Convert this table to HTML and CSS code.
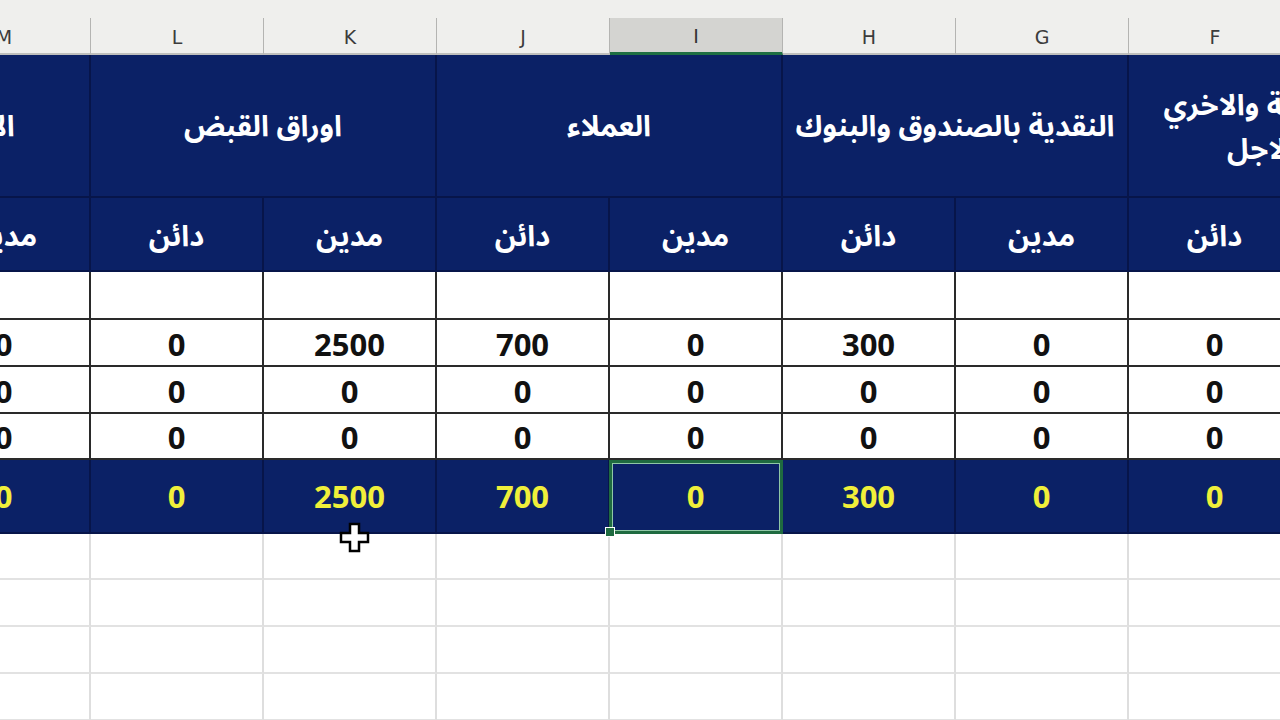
FILE: index.html
```html
<!DOCTYPE html>
<html lang="ar">
<head>
<meta charset="utf-8">
<title>Sheet</title>
<link rel="stylesheet" href="styles.css">
</head>
<body>
<div class="top"></div>
<div class="viewport">
  <div class="sheet">
    <div class="ch">N</div><div class="ch">M</div><div class="ch">L</div><div class="ch">K</div><div class="ch">J</div>
    <div class="ch ch-sel">I</div><div class="ch">H</div><div class="ch">G</div><div class="ch">F</div><div class="ch">E</div>

    <div class="h1 span2 h1-first" dir="rtl">الاصول الثابتة</div>
    <div class="h1 span2" dir="rtl">اوراق القبض</div>
    <div class="h1 span2" dir="rtl">العملاء</div>
    <div class="h1 span2" dir="rtl">النقدية بالصندوق والبنوك</div>
    <div class="h1 span2 two" dir="rtl"><span>الاوراق المالية والاخري</span><span>طويلة الاجل</span></div>

    <div class="h2">دائن</div><div class="h2">مدين</div>
    <div class="h2">دائن</div><div class="h2">مدين</div>
    <div class="h2">دائن</div><div class="h2">مدين</div>
    <div class="h2">دائن</div><div class="h2">مدين</div>
    <div class="h2">دائن</div><div class="h2">مدين</div>

    <div class="d r0"></div><div class="d r0"></div><div class="d r0"></div><div class="d r0"></div><div class="d r0"></div>
    <div class="d r0"></div><div class="d r0"></div><div class="d r0"></div><div class="d r0"></div><div class="d r0"></div>

    <div class="d r1">0</div><div class="d r1">0</div><div class="d r1">0</div><div class="d r1">2500</div><div class="d r1">700</div>
    <div class="d r1">0</div><div class="d r1">300</div><div class="d r1">0</div><div class="d r1">0</div><div class="d r1">0</div>

    <div class="d r1">0</div><div class="d r1">0</div><div class="d r1">0</div><div class="d r1">0</div><div class="d r1">0</div>
    <div class="d r1">0</div><div class="d r1">0</div><div class="d r1">0</div><div class="d r1">0</div><div class="d r1">0</div>

    <div class="d r2">0</div><div class="d r2">0</div><div class="d r2">0</div><div class="d r2">0</div><div class="d r2">0</div>
    <div class="d r2">0</div><div class="d r2">0</div><div class="d r2">0</div><div class="d r2">0</div><div class="d r2">0</div>

    <div class="t">0</div><div class="t">0</div><div class="t">0</div><div class="t">2500</div><div class="t">700</div>
    <div class="t t-sel">0<span class="handle"></span></div><div class="t">300</div><div class="t">0</div><div class="t">0</div><div class="t">0</div>

    <div class="g"></div><div class="g"></div><div class="g"></div><div class="g"></div><div class="g"></div>
    <div class="g"></div><div class="g"></div><div class="g"></div><div class="g"></div><div class="g"></div>
    <div class="g"></div><div class="g"></div><div class="g"></div><div class="g"></div><div class="g"></div>
    <div class="g"></div><div class="g"></div><div class="g"></div><div class="g"></div><div class="g"></div>
    <div class="g"></div><div class="g"></div><div class="g"></div><div class="g"></div><div class="g"></div>
    <div class="g"></div><div class="g"></div><div class="g"></div><div class="g"></div><div class="g"></div>
    <div class="g"></div><div class="g"></div><div class="g"></div><div class="g"></div><div class="g"></div>
    <div class="g"></div><div class="g"></div><div class="g"></div><div class="g"></div><div class="g"></div>
  </div>
  <svg class="cursor" width="32" height="32" viewBox="0 0 32 32" aria-hidden="true">
    <path d="M11 2 H20 V11 H29 V20 H20 V29 H11 V20 H2 V11 H11 Z" fill="#ffffff" stroke="#000000" stroke-width="2.5" stroke-linejoin="miter"/>
  </svg>
</div>
</body>
</html>
```

FILE: styles.css
```css
html, body {
  margin: 0;
  padding: 0;
  background: #ffffff;
  overflow: hidden;
  width: 1280px;
  height: 720px;
}

.top {
  height: 18px;
  background: #efefed;
}

.viewport {
  position: relative;
  width: 1280px;
  height: 702px;
  overflow: hidden;
}

.sheet {
  margin-left: -255px;
  display: grid;
  grid-template-columns: repeat(10, 173px);
  grid-template-rows: 37px 143px 74px 48px 47px 47px 46px 74px 46px 47px 47px 47px;
  width: 1730px;
}

.sheet > div {
  box-sizing: border-box;
  display: flex;
  align-items: center;
  justify-content: center;
}

.ch {
  background: #efefed;
  color: #3c3c3c;
  font-family: "DejaVu Sans", "Liberation Sans", sans-serif;
  font-size: 19px;
  border-right: 1px solid #b4b4b2;
  border-bottom: 2px solid #bfbfbd;
  background-clip: padding-box;
  padding-top: 2px;
}

.ch-sel {
  background: #d4d4d1;
  border-bottom: 3px solid #1f6f43;
  color: #333;
}

.h1, .h2 {
  background: #0b2166;
  color: #ffffff;
  font-family: "Noto Sans Arabic", "DejaVu Sans", sans-serif;
  font-weight: bold;
  font-size: 29px;
  border-right: 2px solid #07154a;
  border-bottom: 2px solid #07154a;
  white-space: nowrap;
}

.span2 {
  grid-column: span 2;
}

.h1 {
  padding-top: 2px;
}

.h1-first {
  padding-left: 22px;
}

.two {
  flex-direction: column;
  line-height: 44px;
  padding-top: 4px;
}

.h2 {
  padding-top: 4px;
}

.d {
  background: #ffffff;
  color: #111111;
  font-family: "Open Sans", "Liberation Sans", sans-serif;
  font-weight: bold;
  font-size: 31px;
  border-right: 2px solid #2a2a2a;
  border-bottom: 2px solid #2a2a2a;
  padding-top: 2px;
}

.t {
  background: #0b2166;
  color: #f0ef3a;
  font-family: "Open Sans", "Liberation Sans", sans-serif;
  font-weight: bold;
  font-size: 31px;
  border-right: 2px solid #07154a;
  border-bottom: 2px solid #07154a;
  position: relative;
}

.t-sel::after {
  content: "";
  position: absolute;
  left: -1px;
  top: 0;
  right: -2px;
  bottom: -2px;
  border: 3px solid #1f6b40;
  box-shadow: inset 0 0 0 1px #8fc7a6;
}

.handle {
  position: absolute;
  left: -5px;
  bottom: -5px;
  width: 8px;
  height: 8px;
  background: #1f6b40;
  border: 1px solid #ffffff;
  z-index: 2;
}

.g {
  background: #ffffff;
  border-right: 2px solid #dedede;
  border-bottom: 2px solid #e2e2e2;
}

.cursor {
  position: absolute;
  left: 339px;
  top: 504px;
}
```
